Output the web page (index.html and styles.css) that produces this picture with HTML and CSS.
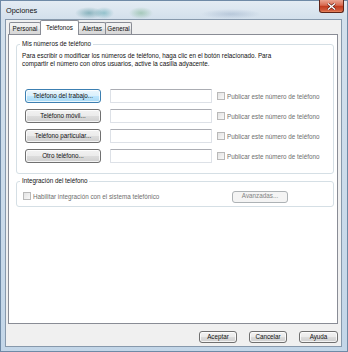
FILE: index.html
```html
<!DOCTYPE html>
<html lang="es">
<head>
<meta charset="utf-8">
<title>Opciones</title>
<link rel="stylesheet" href="styles.css">
</head>
<body>
<div class="win">
  <div class="titlebar">
    <span class="title">Opciones</span>
    <div class="close">
      <svg width="9" height="7" viewBox="0 0 9 7"><path d="M1 0.5 L8 6.5 M8 0.5 L1 6.5" stroke="#5a1a10" stroke-width="2.6"/><path d="M1 0.5 L8 6.5 M8 0.5 L1 6.5" stroke="#fff" stroke-width="1.4"/></svg>
    </div>
  </div>
  <div class="client">
    <div class="tabs">
      <div class="tab t-personal">Personal</div>
      <div class="tab t-tel active">Teléfonos</div>
      <div class="tab t-alert">Alertas</div>
      <div class="tab t-gen">General</div>
    </div>
    <div class="panel">
      <div class="group g1">
        <div class="gtitle">Mis números de teléfono</div>
        <p class="desc">Para escribir o modificar los números de teléfono, haga clic en el botón relacionado. Para<br>compartir el número con otros usuarios, active la casilla adyacente.</p>
        <div class="rows">
          <div class="row"><button class="btn default">Teléfono del trabajo...</button><div class="input"></div><span class="chk"></span><span class="lbl">Publicar este número de teléfono</span></div>
          <div class="row"><button class="btn">Teléfono móvil...</button><div class="input"></div><span class="chk"></span><span class="lbl">Publicar este número de teléfono</span></div>
          <div class="row"><button class="btn">Teléfono particular...</button><div class="input"></div><span class="chk"></span><span class="lbl">Publicar este número de teléfono</span></div>
          <div class="row"><button class="btn">Otro teléfono...</button><div class="input"></div><span class="chk"></span><span class="lbl">Publicar este número de teléfono</span></div>
        </div>
      </div>
      <div class="group g2">
        <div class="gtitle">Integración del teléfono</div>
        <div class="row2">
          <span class="chk"></span><span class="lbl">Habilitar integración con el sistema telefónico</span>
          <button class="btn disabled adv">Avanzadas...</button>
        </div>
      </div>
    </div>
    <div class="footer">
      <button class="btn fbtn">Aceptar</button>
      <button class="btn fbtn">Cancelar</button>
      <button class="btn fbtn ayuda">Ayuda</button>
    </div>
  </div>
</div>
</body>
</html>
```

FILE: styles.css
```css
* { box-sizing: border-box; }
html, body { margin: 0; padding: 0; }
body {
  width: 348px;
  height: 352px;
  overflow: hidden;
  font-family: "Liberation Sans", Arial, sans-serif;
  font-size: 6.3px;
  color: #111;
  background: #c4d7e9;
}
.win {
  width: 348px;
  height: 352px;
  display: flex;
  flex-direction: column;
  border: 1px solid #6f8aa6;
  background:
    radial-gradient(ellipse 14px 6px at 88px 12px, rgba(40,120,130,.45), transparent),
    radial-gradient(ellipse 10px 6px at 103px 12px, rgba(40,140,150,.4), transparent),
    radial-gradient(ellipse 12px 6px at 140px 12px, rgba(70,150,90,.35), transparent),
    radial-gradient(ellipse 30px 5px at 230px 13px, rgba(90,120,160,.25), transparent),
    linear-gradient(180deg, #e4ecf3 0, #d3e0ec 18px, #c3d6e8 100%);
}
.titlebar {
  height: 18px;
  display: flex;
  align-items: center;
  padding-left: 5px;
}
.title {
  font-size: 7.4px;
  color: #111;
}
.close {
  margin-left: auto;
  margin-right: 3px;
  align-self: flex-start;
  width: 25px;
  height: 13px;
  margin-top: -1px;
  border: 1px solid #5e2418;
  border-top: none;
  border-radius: 0 0 3px 3px;
  background: linear-gradient(180deg, #eaa592 0, #d8694f 45%, #c13a1d 50%, #d0593b 85%, #e88a63 100%);
  display: flex;
  align-items: center;
  justify-content: center;
}
.client {
  flex: 1;
  margin: 0 5px 4px 4px;
  background: #f0f0f0;
  border: 1px solid #8799ac;
  display: flex;
  flex-direction: column;
  padding: 0 3px 0 2px;
}
.tabs {
  height: 14px;
  display: flex;
  align-items: flex-end;
  position: relative;
  z-index: 1;
}
.tab {
  height: 12px;
  border: 1px solid #898c95;
  border-bottom: none;
  border-radius: 2px 2px 0 0;
  background: linear-gradient(180deg, #f3f3f3 0, #ebebeb 50%, #dedede 50%, #d8d8d8 100%);
  display: flex;
  align-items: center;
  justify-content: center;
  margin-left: -1px;
  color: #111;
}
.t-personal { margin-left: 1px; width: 32px; }
.t-tel { width: 39px; }
.t-alert { width: 28px; }
.t-gen { width: 27px; }
.tab.active {
  height: 15px;
  margin-bottom: -1px;
  background: #fff;
  position: relative;
  z-index: 2;
  padding-bottom: 2px;
}
.panel {
  flex: 1;
  background: #fff;
  border: 1px solid #898c95;
  padding: 9px 3px 0 7px;
}
.group {
  border: 1px solid #d5dfe5;
  border-radius: 3px;
  padding: 0 5px 0 5px;
}
.gtitle {
  margin-top: -5px;
  margin-left: -2px;
  width: fit-content;
  padding: 0 2px;
  background: #fff;
  line-height: 8px;
  color: #111;
}
.desc {
  margin: 4px 0 0 0;
  line-height: 8px;
  white-space: nowrap;
}
.g1 { padding-bottom: 10px; }
.rows {
  margin-top: 21px;
  display: flex;
  flex-direction: column;
  gap: 6px;
}
.row {
  height: 14px;
  display: flex;
  align-items: center;
  padding-left: 3px;
}
.btn {
  font-family: inherit;
  font-size: inherit;
  color: #111;
  padding: 0;
  border: 1px solid #707070;
  border-radius: 3px;
  background: linear-gradient(180deg, #f2f2f2 0, #ebebeb 50%, #dddddd 50%, #cfcfcf 100%);
  box-shadow: inset 0 0 0 1px rgba(255,255,255,.75);
  line-height: 1;
}
.row .btn { width: 76px; height: 14px; }
.btn.default {
  border-color: #3c7fb1;
  background: linear-gradient(180deg, #eaf6fd 0, #d9f0fc 50%, #bee6fd 50%, #a7d9f5 100%);
}
.btn.disabled {
  border-color: #adb2b5;
  background: #f4f4f4;
  box-shadow: none;
  color: #838383;
}
.input {
  width: 102px;
  height: 14px;
  margin-left: 9px;
  background: #fff;
  border: 1px solid #dde1e7;
  border-top-color: #abadb3;
  border-radius: 1px;
}
.chk {
  width: 8px;
  height: 8px;
  border: 1px solid #b9b9b9;
  background: linear-gradient(135deg, #e3e3e3, #f8f8f8);
  flex: none;
}
.row .chk { margin-left: 5px; }
.lbl {
  margin-left: 2px;
  color: #6e6e6e;
  white-space: nowrap;
}
.g2 {
  margin-top: 7px;
  padding-bottom: 4px;
}
.row2 {
  margin-top: 5px;
  height: 12px;
  display: flex;
  align-items: center;
  padding-left: 1px;
}
.row2 .lbl { margin-left: 2px; }
.adv {
  margin-left: auto;
  margin-right: 40px;
  width: 56px;
  height: 12px;
  margin-top: 1px;
}
.footer {
  height: 22px;
  display: flex;
  justify-content: flex-end;
  align-items: flex-start;
  padding-top: 7px;
  padding-right: 0;
  gap: 12px;
}
.fbtn { width: 38px; height: 12px; }
.ayuda { width: 39px; }
```
